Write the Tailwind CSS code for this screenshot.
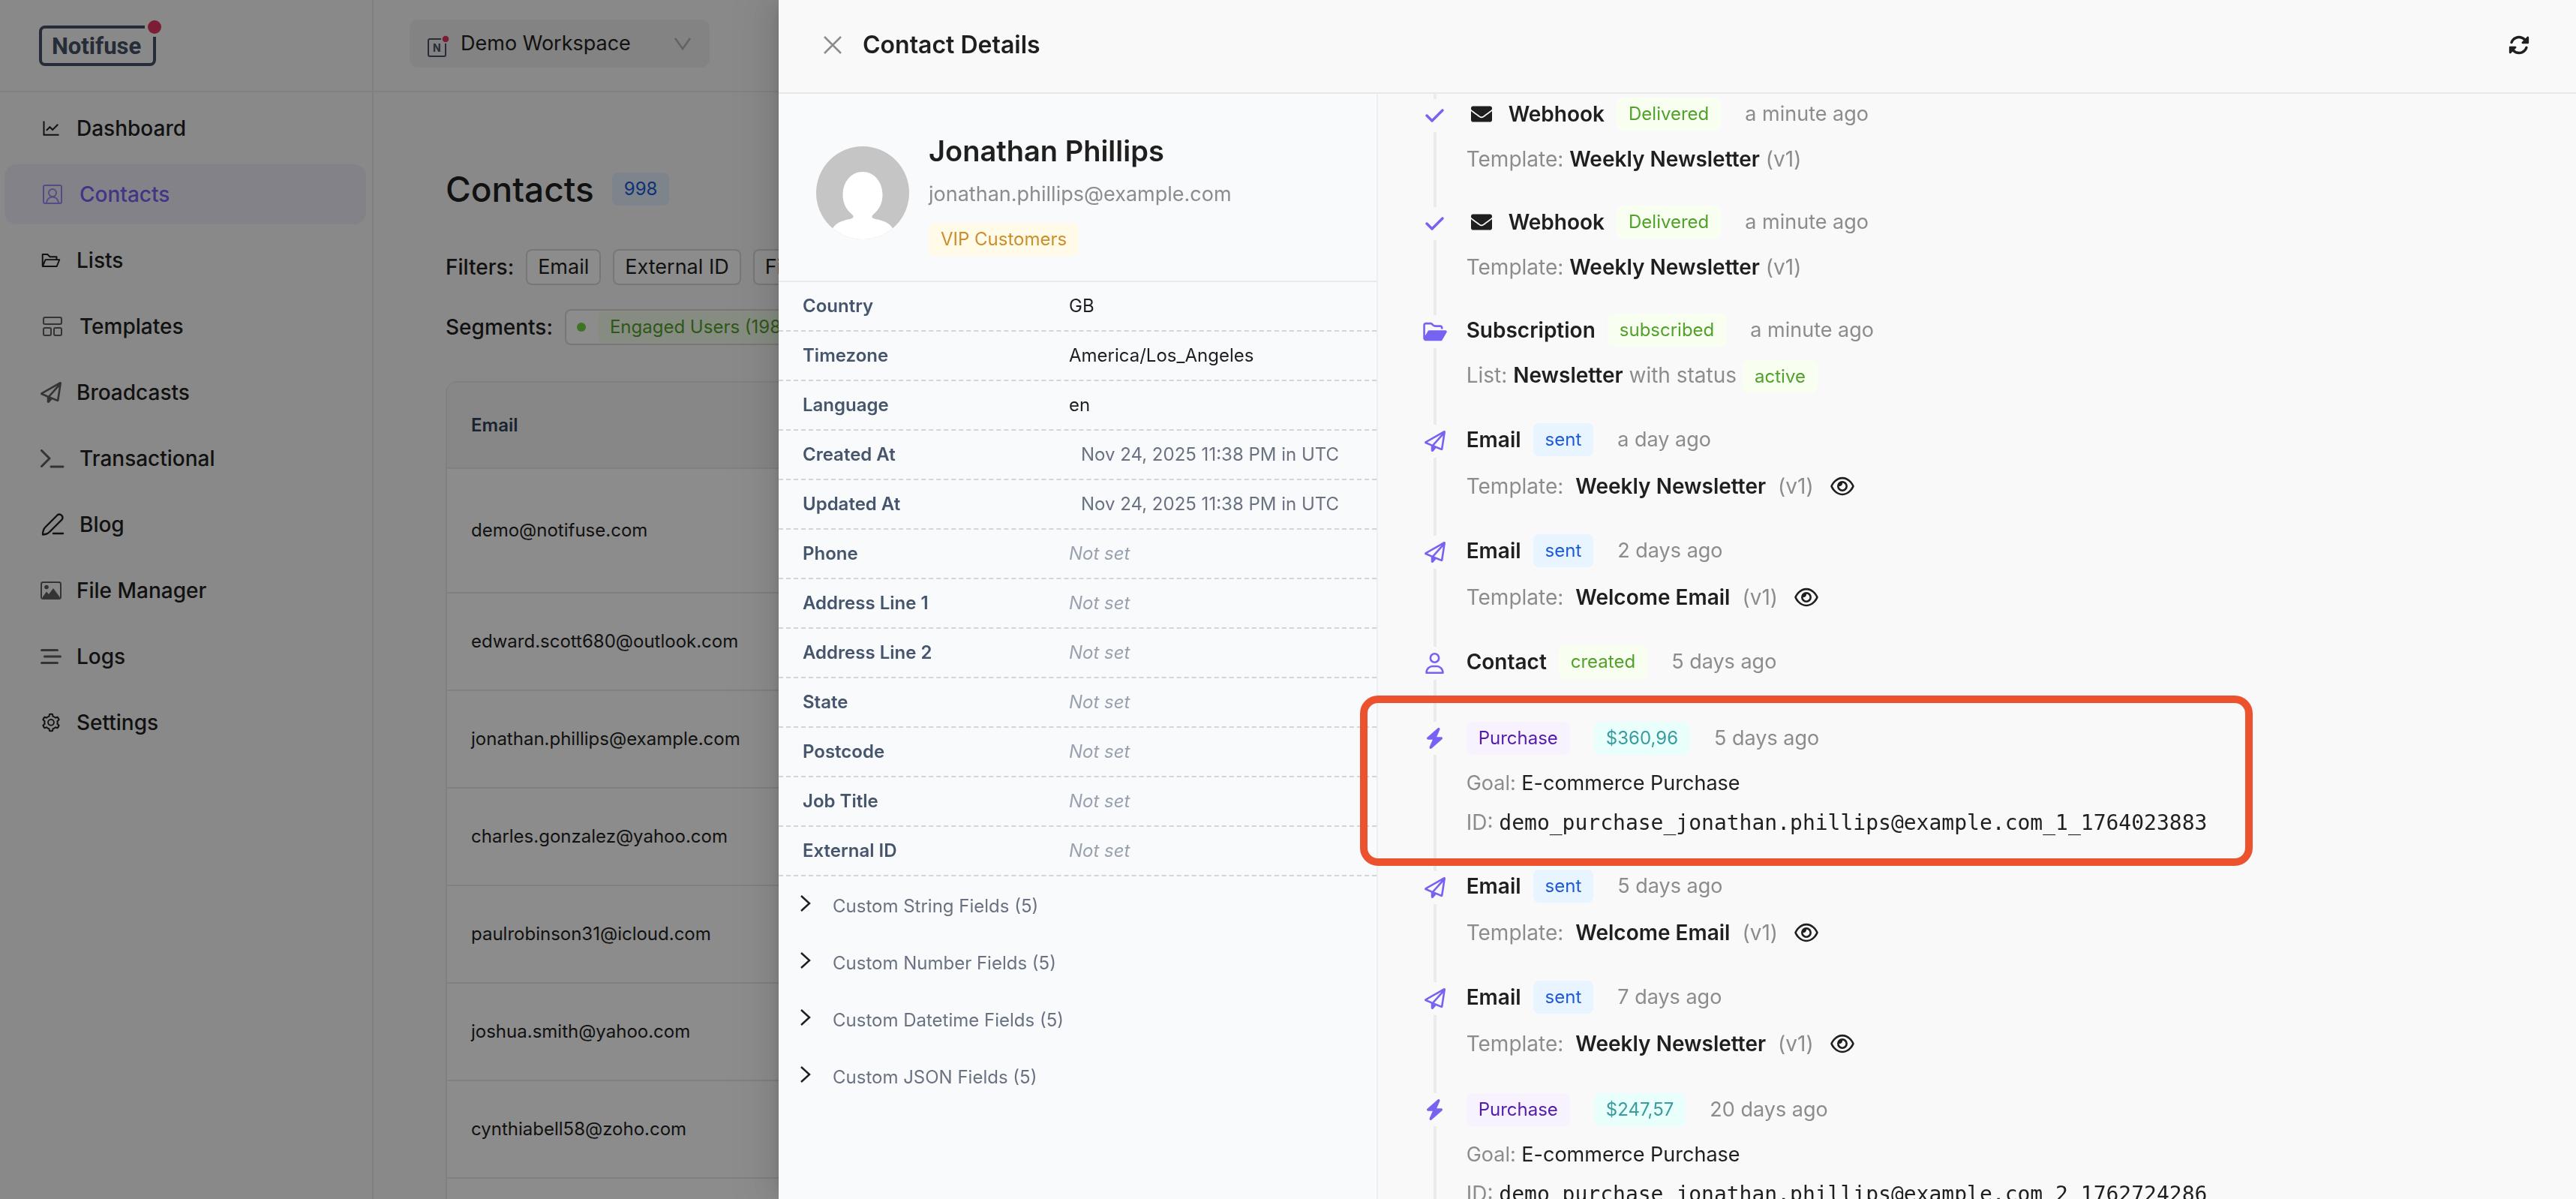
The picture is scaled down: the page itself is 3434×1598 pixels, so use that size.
<!DOCTYPE html>
<html lang="en">
<head>
    <meta charset="UTF-8">
    <meta name="viewport" content="width=device-width, initial-scale=1.0">
    <title>Contacts - Notifuse</title>
    <script src="https://cdn.jsdelivr.net/npm/@tailwindcss/browser@4"></script>
</head>
<body class="h-screen overflow-hidden bg-[#f9f9f9] font-['Inter',sans-serif] text-[28px] leading-[44px] text-[#1f1f1f]">
    <!-- Icon sprite -->
    <svg class="hidden">
        <symbol id="i-chart" viewBox="0 0 1024 1024"><path d="M888 792H200V168c0-4.4-3.6-8-8-8h-56c-4.4 0-8 3.6-8 8v688c0 4.4 3.6 8 8 8h752c4.4 0 8-3.6 8-8v-56c0-4.4-3.6-8-8-8zM305.8 637.7c3.1 3.1 8.1 3.1 11.3 0l138.3-137.6L583 628.5c3.1 3.1 8.2 3.1 11.3 0l275.4-275.3c3.1-3.1 3.1-8.2 0-11.3l-39.6-39.6c-3.1-3.1-8.2-3.1-11.3 0l-230 229.9L461.4 404c-3.1-3.1-8.2-3.1-11.3 0L266.3 586.7c-3.1 3.1-3.1 8.2 0 11.3l39.5 39.7z"/></symbol>
        <symbol id="i-folder" viewBox="0 0 1024 1024"><path d="M928 444H820V330.4c0-17.7-14.3-32-32-32H473L355.7 186.2a8.15 8.15 0 00-5.5-2.2H96c-17.7 0-32 14.3-32 32v592c0 17.7 14.3 32 32 32h698c13 0 24.8-7.9 29.7-20l134-332c1.5-3.8 2.3-7.9 2.3-12 0-17.7-14.3-32-32-32zM136 256h188.5l119.6 114.4H748V444H238c-13 0-24.8 7.9-29.7 20L136 643.2V256zm635.3 512H159l103.3-256h612.4L771.3 768z"/></symbol>
        <symbol id="i-gear" viewBox="0 0 1024 1024"><path d="M924.8 625.7l-65.5-56c3.1-19 4.7-38.4 4.7-57.8s-1.6-38.8-4.7-57.8l65.5-56a32.03 32.03 0 009.3-35.2l-.9-2.6a443.74 443.74 0 00-79.7-137.9l-1.8-2.1a32.12 32.12 0 00-35.1-9.5l-81.3 28.9c-30-24.6-63.5-44-99.7-57.6l-15.7-85a32.05 32.05 0 00-25.8-25.7l-2.7-.5c-52.1-9.4-106.9-9.4-159 0l-2.7.5a32.05 32.05 0 00-25.8 25.7l-15.8 85.4a351.86 351.86 0 00-99 57.4l-81.9-29.1a32 32 0 00-35.1 9.5l-1.8 2.1a446.02 446.02 0 00-79.7 137.9l-.9 2.6c-4.5 12.5-.8 26.5 9.3 35.2l66.3 56.6c-3.1 18.8-4.6 38-4.6 57.1 0 19.2 1.5 38.4 4.6 57.1L99 625.5a32.03 32.03 0 00-9.3 35.2l.9 2.6c18.1 50.4 44.9 96.9 79.7 137.9l1.8 2.1a32.12 32.12 0 0035.1 9.5l81.9-29.1c29.8 24.5 63.1 43.9 99 57.4l15.8 85.4a32.05 32.05 0 0025.8 25.7l2.7.5a449.4 449.4 0 00159 0l2.7-.5a32.05 32.05 0 0025.8-25.7l15.7-85a350 350 0 0099.7-57.6l81.3 28.9a32 32 0 0035.1-9.5l1.8-2.1c34.8-41.1 61.6-87.5 79.7-137.9l.9-2.6c4.5-12.3.8-26.3-9.3-35zM788.3 465.9c2.5 15.1 3.8 30.6 3.8 46.1s-1.3 31-3.8 46.1l-6.6 40.1 74.7 63.9a370.03 370.03 0 01-42.6 73.6L721 702.8l-31.4 25.8c-23.9 19.6-50.5 35-79.3 45.8l-38.1 14.3-17.9 97a377.5 377.5 0 01-85 0l-17.9-97.2-37.8-14.5c-28.5-10.8-55-26.2-78.7-45.7l-31.4-25.9-93.4 33.2c-17-22.9-31.2-47.6-42.6-73.6l75.5-64.5-6.5-40c-2.4-14.9-3.7-30.3-3.7-45.5 0-15.3 1.2-30.6 3.7-45.5l6.5-40-75.5-64.5c11.3-26.1 25.6-50.7 42.6-73.6l93.4 33.2 31.4-25.9c23.7-19.5 50.2-34.9 78.7-45.7l37.9-14.3 17.9-97.2c28.1-3.2 56.8-3.2 85 0l17.9 97 38.1 14.3c28.7 10.8 55.4 26.2 79.3 45.8l31.4 25.8 92.8-32.9c17 22.9 31.2 47.6 42.6 73.6L781.8 426l6.5 39.9zM512 326c-97.2 0-176 78.8-176 176s78.8 176 176 176 176-78.8 176-176-78.8-176-176-176zm79.2 255.2A111.6 111.6 0 01512 614c-29.9 0-58-11.7-79.2-32.8A111.6 111.6 0 01400 502c0-29.9 11.7-58 32.8-79.2C454 401.6 482.1 390 512 390c29.9 0 58 11.6 79.2 32.8A111.6 111.6 0 01624 502c0 29.9-11.7 58-32.8 79.2z"/></symbol>
        <symbol id="i-plane" viewBox="0 0 512 512"><path d="M16.1 260.2c-22.6 12.9-20.5 47.3 3.6 57.3L160 376V479.3c0 18.1 14.6 32.7 32.7 32.7c9.7 0 18.9-4.3 25.1-11.8l62-74.3 123.9 51.6c18.9 7.9 40.8-4.5 43.9-24.7l64-416c1.9-12.1-3.4-24.3-13.5-31.2s-23.3-7.5-34-1.4l-448 256zm52.1 25.5L409.7 90.6 190.1 336l1.2 1L68.2 285.7zM403.3 425.4L236.7 355.9 450.8 116.6 403.3 425.4z"/></symbol>
        <symbol id="i-contact" viewBox="0 0 32 32"><g fill="none" stroke="currentColor" stroke-width="2"><rect x="4" y="4" width="24" height="24" rx="2"/><circle cx="16" cy="14" r="5"/><path d="M8 28c0-5 3.500-8.500 8-8.500s8 3.500 8 8.500"/></g></symbol>
        <symbol id="i-layout" viewBox="0 0 32 32"><g fill="none" stroke="currentColor" stroke-width="2"><rect x="4" y="4" width="24" height="9" rx="2"/><rect x="4" y="18" width="10" height="10" rx="2"/><rect x="18" y="18" width="10" height="10" rx="2"/></g></symbol>
        <symbol id="i-terminal" viewBox="0 0 32 32"><path d="M1.500 5.500 12 16 1.500 26.500M14 27h16" fill="none" stroke="currentColor" stroke-width="3" stroke-linecap="round" stroke-linejoin="round"/></symbol>
        <symbol id="i-pen" viewBox="0 0 32 32"><path d="M3 29.500c0-5 .5-7 3.500-10L22.500 3.500a4.300 4.300 0 0 1 6 6L12.500 25.500c-3 3-4.500 3.500-9.500 4zM17 28h13" fill="none" stroke="currentColor" stroke-width="2.400" stroke-linecap="round" stroke-linejoin="round"/></symbol>
        <symbol id="i-image" viewBox="0 0 28 28"><rect x="1" y="3" width="26" height="22" rx="2.500" fill="none" stroke="currentColor" stroke-width="2"/><circle cx="8" cy="9.500" r="2.800"/><path d="M3 22.500 8 15.500l3 3.500 6-8 8.500 11.500v1.500H3z"/></symbol>
        <symbol id="i-lines" viewBox="0 0 28 28"><path d="M1.500 5.500h21M5.500 14h21M1.500 22.500h21" fill="none" stroke="currentColor" stroke-width="3" stroke-linecap="round"/></symbol>
        <symbol id="i-check" viewBox="0 0 448 512"><path d="M438.600 105.400c12.500 12.500 12.500 32.800 0 45.300l-256 256c-12.500 12.500-32.800 12.500-45.300 0l-128-128c-12.500-12.500-12.500-32.800 0-45.300s32.800-12.500 45.300 0L160 338.700 393.400 105.400c12.500-12.500 32.800-12.500 45.300 0z"/></symbol>
        <symbol id="i-mail" viewBox="0 0 512 512"><path d="M502.300 190.800c3.900-3.100 9.700-.2 9.700 4.700V400c0 26.500-21.500 48-48 48H48c-26.500 0-48-21.500-48-48V195.600c0-5 5.700-7.800 9.700-4.700 22.400 17.400 52.100 39.500 154.100 113.600 21.100 15.400 56.700 47.800 92.200 47.600 35.700.3 72-32.800 92.300-47.600 102-74.100 131.600-96.300 154-113.700zM256 320c23.200.4 56.600-29.200 73.400-41.400 132.700-96.300 142.800-104.700 173.400-128.700 5.800-4.500 9.200-11.500 9.200-18.900v-19c0-26.500-21.500-48-48-48H48c-26.500 0-48 21.500-48 48v19c0 7.400 3.400 14.300 9.200 18.900 30.600 23.900 40.700 32.400 173.400 128.700 16.800 12.200 50.200 41.800 73.400 41.400z"/></symbol>
        <symbol id="i-folder-solid" viewBox="0 0 576 512"><path d="M384 480h48c11.400 0 21.900-6 27.600-15.900l112-192c5.800-9.900 5.800-22.100 .1-32.100S555.500 224 544 224H144c-11.400 0-21.900 6-27.600 15.900L48 357.100V96c0-8.800 7.200-16 16-16H181.500c4.200 0 8.300 1.700 11.300 4.700l26.500 26.500c21 21 49.500 32.800 79.200 32.800H416c8.800 0 16 7.200 16 16v32h48V160c0-35.300-28.700-64-64-64H298.500c-17 0-33.300-6.700-45.300-18.700L226.700 50.700c-12-12-28.300-18.700-45.300-18.700H64C28.700 32 0 60.700 0 96V416c0 35.300 28.700 64 64 64H87.700 384z"/></symbol>
        <symbol id="i-user" viewBox="0 0 448 512"><path d="M304 128a80 80 0 1 0 -160 0 80 80 0 1 0 160 0zM96 128a128 128 0 1 1 256 0A128 128 0 1 1 96 128zM49.300 464H398.700c-8.900-63.300-63.300-112-129-112H178.300c-65.700 0-120.100 48.700-129 112zM0 482.300C0 383.800 79.800 304 178.300 304h91.400C368.200 304 448 383.800 448 482.300c0 16.400-13.300 29.700-29.700 29.700H29.700C13.300 512 0 498.700 0 482.300z"/></symbol>
        <symbol id="i-bolt" viewBox="0 0 448 512"><path d="M349.400 44.600c5.900-13.700 1.500-29.700-10.600-38.500s-28.600-8-39.900 1.800l-256 224c-10 8.800-13.600 22.900-8.900 35.300S50.700 288 64 288H175.500L98.600 467.400c-5.900 13.700-1.500 29.700 10.600 38.500s28.600 8 39.900-1.800l256-224c10-8.800 13.600-22.900 8.900-35.300s-16.600-20.700-30-20.700H272.500L349.400 44.600z"/></symbol>
        <symbol id="i-eye" viewBox="0 0 576 512"><path d="M288 80c-65.200 0-118.800 29.600-159.900 67.700C89.600 183.500 63 226 49.400 256c13.600 30 40.200 72.500 78.600 108.300C169.200 402.400 222.800 432 288 432s118.800-29.600 159.900-67.700C486.400 328.500 513 286 526.600 256c-13.600-30-40.200-72.500-78.600-108.300C406.800 109.600 353.200 80 288 80zM95.400 112.600C142.500 68.800 207.200 32 288 32s145.500 36.800 192.600 80.600c46.800 43.500 78.100 95.400 93 131.100c3.300 7.900 3.300 16.700 0 24.600c-14.900 35.700-46.200 87.700-93 131.100C433.500 443.200 368.800 480 288 480s-145.500-36.800-192.600-80.600C48.600 356 17.300 304 2.500 268.300c-3.300-7.900-3.300-16.700 0-24.600C17.300 208 48.600 156 95.400 112.600zM288 336c44.200 0 80-35.800 80-80s-35.800-80-80-80c-.7 0-1.300 0-2 0c1.300 5.100 2 10.500 2 16c0 35.300-28.700 64-64 64c-5.500 0-10.900-.7-16-2c0 .7 0 1.300 0 2c0 44.200 35.800 80 80 80zm0-208a128 128 0 1 1 0 256 128 128 0 1 1 0-256z"/></symbol>
        <symbol id="i-refresh" viewBox="0 0 512 512"><path d="M142.900 142.900c62.200-62.200 162.700-62.500 225.300-1L327 183c-6.900 6.900-8.900 17.200-5.200 26.200s12.500 14.800 22.200 14.800H463.500c0 0 0 0 0 0H472c13.300 0 24-10.700 24-24V72c0-9.700-5.800-18.500-14.800-22.200s-19.300-1.700-26.200 5.200L413.400 96.600c-87.600-86.500-228.700-86.200-315.800 1C73.200 122 55.600 150.700 44.800 181.400c-5.900 16.700 2.900 34.900 19.500 40.800s34.900-2.900 40.800-19.500c7.700-21.800 20.200-42.300 37.800-59.800zM16 312v7.600 .7V440c0 9.700 5.800 18.500 14.800 22.200s19.300 1.700 26.200-5.200l41.600-41.600c87.600 86.500 228.700 86.200 315.800-1c24.400-24.400 42.100-53.100 52.900-83.700c5.900-16.700-2.900-34.900-19.500-40.800s-34.900 2.900-40.800 19.500c-7.700 21.800-20.200 42.300-37.800 59.800c-62.200 62.200-162.700 62.500-225.300 1L185 329c6.900-6.900 8.900-17.200 5.200-26.200s-12.500-14.800-22.200-14.800H48.400h-.7H40c-13.300 0-24 10.700-24 24z"/></symbol>
        <symbol id="i-right" viewBox="0 0 24 24"><path d="M6 2 17 12 6 22" fill="none" stroke="currentColor" stroke-width="2.500"/></symbol>
    </svg>

    <div class="flex h-full">
        <!-- Sidebar -->
        <aside class="w-[498px] shrink-0 border-r-2 border-[#e7e7e7]">
            <div class="h-[123px] border-b-2 border-[#ececec] pt-6 pl-[50px]">
                <svg class="h-[68px] w-[168px]" viewBox="0 0 168 68" role="img" aria-label="Notifuse">
                    <path d="M143 12H10a6 6 0 0 0-6 6v38a6 6 0 0 0 6 6h140a6 6 0 0 0 6-6V25" fill="none" stroke="#465066" stroke-width="4"/>
                    <circle cx="156" cy="12" r="9" fill="#e0365f"/>
                    <text x="19" y="48" class="font-['Roboto',sans-serif] text-[31px] font-bold" fill="#465066">Notifuse</text>
                </svg>
            </div>
            <nav class="flex flex-col gap-2 py-2 pr-2 pl-1.5 font-medium">
                <a href="#" class="flex h-20 items-center gap-5 rounded-2xl px-12"><svg class="h-7 w-7" fill="currentColor"><use href="#i-chart"/></svg>Dashboard</a>
                <a href="#" class="flex h-20 items-center gap-5 rounded-2xl bg-[#f0edfa] px-12 text-[#7763f1]"><svg class="h-8 w-8 opacity-70"><use href="#i-contact"/></svg>Contacts</a>
                <a href="#" class="flex h-20 items-center gap-5 rounded-2xl px-12"><svg class="h-7 w-7" fill="currentColor"><use href="#i-folder"/></svg>Lists</a>
                <a href="#" class="flex h-20 items-center gap-5 rounded-2xl px-12"><svg class="h-8 w-8 opacity-70"><use href="#i-layout"/></svg>Templates</a>
                <a href="#" class="flex h-20 items-center gap-5 rounded-2xl px-12"><svg class="h-7 w-7 opacity-70" fill="currentColor"><use href="#i-plane"/></svg>Broadcasts</a>
                <a href="#" class="flex h-20 items-center gap-5 rounded-2xl px-12"><svg class="h-8 w-8 opacity-70"><use href="#i-terminal"/></svg>Transactional</a>
                <a href="#" class="flex h-20 items-center gap-5 rounded-2xl px-12"><svg class="h-8 w-8"><use href="#i-pen"/></svg>Blog</a>
                <a href="#" class="flex h-20 items-center gap-5 rounded-2xl px-12"><svg class="h-7 w-7 opacity-70" fill="currentColor"><use href="#i-image"/></svg>File Manager</a>
                <a href="#" class="flex h-20 items-center gap-5 rounded-2xl px-12"><svg class="h-7 w-7 opacity-70"><use href="#i-lines"/></svg>Logs</a>
                <a href="#" class="flex h-20 items-center gap-5 rounded-2xl px-12"><svg class="h-7 w-7" fill="currentColor"><use href="#i-gear"/></svg>Settings</a>
            </nav>
        </aside>

        <!-- Page -->
        <main class="min-w-0 flex-1">
            <header class="flex h-[123px] items-start border-b-2 border-[#ececec] pt-[26px] pl-12">
                <button type="button" class="flex h-16 w-[400px] items-center rounded-xl bg-[#eeeeee] px-6">
                    <svg class="h-9 w-8" viewBox="0 0 32 36">
                        <path d="M18 12H3a2 2 0 0 0-2 2v19a2 2 0 0 0 2 2h19a2 2 0 0 0 2-2V18" fill="none" stroke="#465066" stroke-width="2"/>
                        <circle cx="24" cy="12" r="4.300" fill="#e0365f"/>
                        <text x="7" y="29" class="text-[14px] font-bold" fill="#465066">N</text>
                    </svg>
                    <span class="ml-3 text-[27px]">Demo Workspace</span>
                    <svg class="ml-auto h-6 w-6" viewBox="0 0 24 24"><path d="m2 5 10 14 10-14" fill="none" stroke="#b4b4b4" stroke-width="2.500"/></svg>
                </button>
            </header>

            <div class="pt-[101px] pl-24">
                <div class="flex items-center gap-6">
                    <h1 class="text-[46px] leading-[56px] font-medium">Contacts</h1>
                    <span class="rounded-lg bg-[#e6f0ff] px-4 text-[24px] text-[#1d5bd6]">998</span>
                </div>
                <div class="mt-[52px] flex items-center gap-4 whitespace-nowrap">
                    <span class="font-medium">Filters:</span>
                    <button type="button" class="h-12 rounded-lg border-2 border-[#d9d9d9] bg-white px-3.5 text-[27px]">Email</button>
                    <button type="button" class="h-12 rounded-lg border-2 border-[#d9d9d9] bg-white px-3.5 text-[27px]">External ID</button>
                    <button type="button" class="h-12 rounded-lg border-2 border-[#d9d9d9] bg-white px-3.5 text-[27px]">First Name</button>
                </div>
                <div class="mt-8 flex items-center gap-4 whitespace-nowrap">
                    <span class="font-medium">Segments:</span>
                    <button type="button" class="flex h-12 items-center gap-4 rounded-lg border-2 border-[#d9d9d9] bg-white pl-3.5">
                        <span class="h-3 w-3 rounded-full bg-[#73d13d]"></span>
                        <span class="rounded-lg bg-[#f6ffed] px-4 text-[24px] text-[#52a12c]">Engaged Users (198)</span>
                    </button>
                </div>

                <div class="mt-12 overflow-hidden rounded-tl-2xl border-t-2 border-l-2 border-[#e9e9e9] bg-white">
                    <table class="w-full text-left text-[24px]">
                        <thead class="bg-[#f6f6f6] text-slate-700">
                            <tr class="h-[114px] border-b-2 border-[#e9e9e9]"><th class="pl-8 font-semibold">Email</th></tr>
                        </thead>
                        <tbody>
                            <tr class="h-[166px] border-b-2 border-[#e9e9e9]"><td class="pl-8">demo@notifuse.com</td></tr>
                            <tr class="h-[130px] border-b-2 border-[#e9e9e9]"><td class="pl-8">edward.scott680@outlook.com</td></tr>
                            <tr class="h-[130px] border-b-2 border-[#e9e9e9]"><td class="pl-8">jonathan.phillips@example.com</td></tr>
                            <tr class="h-[130px] border-b-2 border-[#e9e9e9]"><td class="pl-8">charles.gonzalez@yahoo.com</td></tr>
                            <tr class="h-[130px] border-b-2 border-[#e9e9e9]"><td class="pl-8">paulrobinson31@icloud.com</td></tr>
                            <tr class="h-[130px] border-b-2 border-[#e9e9e9]"><td class="pl-8">joshua.smith@yahoo.com</td></tr>
                            <tr class="h-[130px] border-b-2 border-[#e9e9e9]"><td class="pl-8">cynthiabell58@zoho.com</td></tr>
                            <tr class="h-[130px]"><td></td></tr>
                        </tbody>
                    </table>
                </div>
            </div>
        </main>
    </div>

    <!-- Drawer -->
    <div class="fixed inset-0 flex bg-black/45 pl-[1038px]">
        <section class="flex min-w-0 flex-1 flex-col bg-[#f9f9f9] shadow-[-12px_0_32px_0_rgba(0,0,0,0.08),-6px_0_12px_-8px_rgba(0,0,0,0.12),-18px_0_56px_16px_rgba(0,0,0,0.05)]">
            <header class="flex h-[125px] shrink-0 items-center border-b-2 border-[#e8e8e8] pr-[62px] pb-1 pl-[58px]">
                <button type="button" aria-label="Close" class="text-[#8c8c8c]"><svg class="h-7 w-7" viewBox="0 0 28 28"><path d="M3 3 25 25M25 3 3 25" fill="none" stroke="currentColor" stroke-width="2.500"/></svg></button>
                <h2 class="ml-[26px] text-[32px] leading-[48px] font-semibold">Contact Details</h2>
                <button type="button" aria-label="Refresh" class="ml-auto"><svg class="h-7 w-7" fill="currentColor"><use href="#i-refresh"/></svg></button>
            </header>

            <div class="flex min-h-0 flex-1 overflow-hidden">
                <!-- Profile -->
                <div class="w-1/3 shrink-0 border-r-2 border-[#eeeff2] bg-[#f9fafc]">
                    <div class="flex items-center gap-[26px] border-b-2 border-[#e7e9ec] px-[50px] pt-12 pb-[33px]">
                        <svg class="h-[124px] w-[124px] rounded-full" viewBox="0 0 124 124">
                            <rect width="124" height="124" fill="#c5c5c5"/>
                            <path d="M62 34c15 0 26.500 13 26.500 31 0 11-5 20-12.500 26-3 3-1.500 5 3 6 12 2 20 6 24 14v13H21v-13c4-8 12-12 24-14 4.500-1 6-3 3-6-7.500-6-12.500-15-12.500-26C35.500 47 47 34 62 34z" fill="#fff"/>
                        </svg>
                        <div>
                            <h3 class="text-[38px] leading-[56px] font-semibold">Jonathan Phillips</h3>
                            <p class="mt-2 text-[27px] text-[#8c8c8c]">jonathan.phillips@example.com</p>
                            <span class="mt-4 inline-block rounded-lg bg-[#fffbe8] px-4 align-top text-[24px] text-[#cc8e2c]">VIP Customers</span>
                        </div>
                    </div>
                    <dl class="text-[24px]">
                        <div class="flex h-[66px] items-center border-b-2 border-dashed border-gray-300 pl-8"><dt class="w-[355px] font-semibold text-slate-600">Country</dt><dd>GB</dd></div>
                        <div class="flex h-[66px] items-center border-b-2 border-dashed border-gray-300 pl-8"><dt class="w-[355px] font-semibold text-slate-600">Timezone</dt><dd>America/Los_Angeles</dd></div>
                        <div class="flex h-[66px] items-center border-b-2 border-dashed border-gray-300 pl-8"><dt class="w-[355px] font-semibold text-slate-600">Language</dt><dd>en</dd></div>
                        <div class="flex h-[66px] items-center border-b-2 border-dashed border-gray-300 pl-8"><dt class="w-[355px] font-semibold text-slate-600">Created At</dt><dd class="pl-4 text-gray-500">Nov 24, 2025 11:38 PM in UTC</dd></div>
                        <div class="flex h-[66px] items-center border-b-2 border-dashed border-gray-300 pl-8"><dt class="w-[355px] font-semibold text-slate-600">Updated At</dt><dd class="pl-4 text-gray-500">Nov 24, 2025 11:38 PM in UTC</dd></div>
                        <div class="flex h-[66px] items-center border-b-2 border-dashed border-gray-300 pl-8"><dt class="w-[355px] font-semibold text-slate-600">Phone</dt><dd class="text-gray-400 italic">Not set</dd></div>
                        <div class="flex h-[66px] items-center border-b-2 border-dashed border-gray-300 pl-8"><dt class="w-[355px] font-semibold text-slate-600">Address Line 1</dt><dd class="text-gray-400 italic">Not set</dd></div>
                        <div class="flex h-[66px] items-center border-b-2 border-dashed border-gray-300 pl-8"><dt class="w-[355px] font-semibold text-slate-600">Address Line 2</dt><dd class="text-gray-400 italic">Not set</dd></div>
                        <div class="flex h-[66px] items-center border-b-2 border-dashed border-gray-300 pl-8"><dt class="w-[355px] font-semibold text-slate-600">State</dt><dd class="text-gray-400 italic">Not set</dd></div>
                        <div class="flex h-[66px] items-center border-b-2 border-dashed border-gray-300 pl-8"><dt class="w-[355px] font-semibold text-slate-600">Postcode</dt><dd class="text-gray-400 italic">Not set</dd></div>
                        <div class="flex h-[66px] items-center border-b-2 border-dashed border-gray-300 pl-8"><dt class="w-[355px] font-semibold text-slate-600">Job Title</dt><dd class="text-gray-400 italic">Not set</dd></div>
                        <div class="flex h-[66px] items-center border-b-2 border-dashed border-gray-300 pl-8"><dt class="w-[355px] font-semibold text-slate-600">External ID</dt><dd class="text-gray-400 italic">Not set</dd></div>
                    </dl>
                    <div class="flex flex-col gap-8 pt-[18px] pl-6 text-[24px] text-gray-500">
                        <button type="button" class="flex gap-6"><svg class="mt-1.5 h-6 w-6 text-[#1f1f1f]"><use href="#i-right"/></svg>Custom String Fields (5)</button>
                        <button type="button" class="flex gap-6"><svg class="mt-1.5 h-6 w-6 text-[#1f1f1f]"><use href="#i-right"/></svg>Custom Number Fields (5)</button>
                        <button type="button" class="flex gap-6"><svg class="mt-1.5 h-6 w-6 text-[#1f1f1f]"><use href="#i-right"/></svg>Custom Datetime Fields (5)</button>
                        <button type="button" class="flex gap-6"><svg class="mt-1.5 h-6 w-6 text-[#1f1f1f]"><use href="#i-right"/></svg>Custom JSON Fields (5)</button>
                    </div>
                </div>

                <!-- Timeline -->
                <ol class="min-w-0 flex-1 pl-14 whitespace-nowrap">
                    <li class="flex h-[5px] w-10 justify-center"><span class="-mb-0.5 w-1 bg-[#ebebeb]"></span></li>

                    <li class="flex gap-[22px]">
                        <div class="flex w-10 shrink-0 flex-col items-center">
                            <div class="flex h-[46px] items-center pt-0.5 text-[#7763f1]"><svg class="h-7 w-[25px]" fill="currentColor"><use href="#i-check"/></svg></div>
                            <span class="-mb-0.5 w-1 flex-1 bg-[#ebebeb]"></span>
                        </div>
                        <div class="pb-10">
                            <div class="flex items-center">
                                <svg class="mx-1.5 h-7 w-7" fill="currentColor"><use href="#i-mail"/></svg>
                                <strong class="ml-4 font-semibold">Webhook</strong>
                                <span class="ml-4 rounded-lg bg-[#f8fff0] px-4 text-[24px] text-[#52a12c]">Delivered</span>
                                <time class="ml-8 text-[27px] text-[#8c8c8c]">a minute ago</time>
                            </div>
                            <p class="mt-4 text-[#8c8c8c]">Template: <strong class="font-semibold text-[#1f1f1f]">Weekly Newsletter</strong> (v1)</p>
                        </div>
                    </li>

                    <li class="flex gap-[22px]">
                        <div class="flex w-10 shrink-0 flex-col items-center">
                            <div class="flex h-[46px] items-center pt-0.5 text-[#7763f1]"><svg class="h-7 w-[25px]" fill="currentColor"><use href="#i-check"/></svg></div>
                            <span class="-mb-0.5 w-1 flex-1 bg-[#ebebeb]"></span>
                        </div>
                        <div class="pb-10">
                            <div class="flex items-center">
                                <svg class="mx-1.5 h-7 w-7" fill="currentColor"><use href="#i-mail"/></svg>
                                <strong class="ml-4 font-semibold">Webhook</strong>
                                <span class="ml-4 rounded-lg bg-[#f8fff0] px-4 text-[24px] text-[#52a12c]">Delivered</span>
                                <time class="ml-8 text-[27px] text-[#8c8c8c]">a minute ago</time>
                            </div>
                            <p class="mt-4 text-[#8c8c8c]">Template: <strong class="font-semibold text-[#1f1f1f]">Weekly Newsletter</strong> (v1)</p>
                        </div>
                    </li>

                    <li class="flex gap-[22px]">
                        <div class="flex w-10 shrink-0 flex-col items-center">
                            <div class="flex h-[46px] items-center pt-0.5 text-[#7763f1]"><svg class="h-7 w-8" fill="currentColor"><use href="#i-folder-solid"/></svg></div>
                            <span class="-mb-0.5 w-1 flex-1 bg-[#ebebeb]"></span>
                        </div>
                        <div class="pb-10">
                            <div class="flex items-center">
                                <strong class="font-semibold">Subscription</strong>
                                <span class="ml-4 rounded-lg bg-[#f8fff0] px-4 text-[24px] text-[#52a12c]">subscribed</span>
                                <time class="ml-8 text-[27px] text-[#8c8c8c]">a minute ago</time>
                            </div>
                            <div class="mt-4 flex text-[#8c8c8c]">
                                <p>List: <strong class="font-semibold text-[#1f1f1f]">Newsletter</strong> with status</p>
                                <span class="mt-0.5 ml-2 rounded-lg bg-[#f8fff0] px-4 text-[24px] text-[#52a12c]">active</span>
                            </div>
                        </div>
                    </li>

                    <li class="flex gap-[22px]">
                        <div class="flex w-10 shrink-0 flex-col items-center">
                            <div class="flex h-[46px] items-center pt-0.5 text-[#7763f1]"><svg class="h-7 w-7" fill="currentColor"><use href="#i-plane"/></svg></div>
                            <span class="-mb-0.5 w-1 flex-1 bg-[#ebebeb]"></span>
                        </div>
                        <div class="pb-10">
                            <div class="flex items-center">
                                <strong class="font-semibold">Email</strong>
                                <span class="ml-4 rounded-lg bg-[#e8f4ff] px-4 text-[24px] text-[#1d5bd6]">sent</span>
                                <time class="ml-8 text-[27px] text-[#8c8c8c]">a day ago</time>
                            </div>
                            <div class="mt-4 flex h-12 items-center gap-4 text-[#8c8c8c]">
                                <span>Template:</span><strong class="font-semibold text-[#1f1f1f]">Weekly Newsletter</strong><span>(v1)</span>
                                <button type="button" aria-label="Preview" class="px-1.5 text-[#1f1f1f]"><svg class="h-7 w-8" fill="currentColor"><use href="#i-eye"/></svg></button>
                            </div>
                        </div>
                    </li>

                    <li class="flex gap-[22px]">
                        <div class="flex w-10 shrink-0 flex-col items-center">
                            <div class="flex h-[46px] items-center pt-0.5 text-[#7763f1]"><svg class="h-7 w-7" fill="currentColor"><use href="#i-plane"/></svg></div>
                            <span class="-mb-0.5 w-1 flex-1 bg-[#ebebeb]"></span>
                        </div>
                        <div class="pb-10">
                            <div class="flex items-center">
                                <strong class="font-semibold">Email</strong>
                                <span class="ml-4 rounded-lg bg-[#e8f4ff] px-4 text-[24px] text-[#1d5bd6]">sent</span>
                                <time class="ml-8 text-[27px] text-[#8c8c8c]">2 days ago</time>
                            </div>
                            <div class="mt-4 flex h-12 items-center gap-4 text-[#8c8c8c]">
                                <span>Template:</span><strong class="font-semibold text-[#1f1f1f]">Welcome Email</strong><span>(v1)</span>
                                <button type="button" aria-label="Preview" class="px-1.5 text-[#1f1f1f]"><svg class="h-7 w-8" fill="currentColor"><use href="#i-eye"/></svg></button>
                            </div>
                        </div>
                    </li>

                    <li class="flex gap-[22px]">
                        <div class="flex w-10 shrink-0 flex-col items-center">
                            <div class="flex h-[46px] items-center pt-0.5 text-[#7763f1]"><svg class="h-7 w-[25px]" fill="currentColor"><use href="#i-user"/></svg></div>
                            <span class="-mb-0.5 w-1 flex-1 bg-[#ebebeb]"></span>
                        </div>
                        <div class="pb-14">
                            <div class="flex items-center">
                                <strong class="font-semibold">Contact</strong>
                                <span class="ml-4 rounded-lg bg-[#f8fff0] px-4 text-[24px] text-[#52a12c]">created</span>
                                <time class="ml-8 text-[27px] text-[#8c8c8c]">5 days ago</time>
                            </div>
                        </div>
                    </li>

                    <li class="relative flex gap-[22px]">
                        <!-- Highlight frame -->
                        <div class="pointer-events-none absolute -top-[33px] bottom-[5px] -left-20 w-[1190px] rounded-3xl border-[10px] border-[#eb522d]"></div>
                        <div class="flex w-10 shrink-0 flex-col items-center">
                            <div class="flex h-[46px] items-center pt-0.5 text-[#7763f1]"><svg class="h-7 w-[25px]" fill="currentColor"><use href="#i-bolt"/></svg></div>
                            <span class="-mb-0.5 w-1 flex-1 bg-[#ebebeb]"></span>
                        </div>
                        <div class="pb-10">
                            <div class="flex items-center gap-8 pt-0.5">
                                <span class="rounded-lg bg-[#f8f2ff] px-4 text-[24px] text-[#531dab]">Purchase</span>
                                <span class="rounded-lg bg-[#e8fffc] px-4 text-[24px] text-[#3b9c9f]">$360,96</span>
                                <time class="text-[27px] text-[#8c8c8c]">5 days ago</time>
                            </div>
                            <p class="mt-4 text-[27px]"><span class="text-[#8c8c8c]">Goal:</span> E-commerce Purchase</p>
                            <p class="mt-2"><span class="text-[#8c8c8c]">ID:</span> <span class="font-['DejaVu_Sans_Mono',monospace]">demo_purchase_jonathan.phillips@example.com_1_1764023883</span></p>
                        </div>
                    </li>

                    <li class="flex gap-[22px]">
                        <div class="flex w-10 shrink-0 flex-col items-center">
                            <div class="flex h-[46px] items-center pt-0.5 text-[#7763f1]"><svg class="h-7 w-7" fill="currentColor"><use href="#i-plane"/></svg></div>
                            <span class="-mb-0.5 w-1 flex-1 bg-[#ebebeb]"></span>
                        </div>
                        <div class="pb-10">
                            <div class="flex items-center">
                                <strong class="font-semibold">Email</strong>
                                <span class="ml-4 rounded-lg bg-[#e8f4ff] px-4 text-[24px] text-[#1d5bd6]">sent</span>
                                <time class="ml-8 text-[27px] text-[#8c8c8c]">5 days ago</time>
                            </div>
                            <div class="mt-4 flex h-12 items-center gap-4 text-[#8c8c8c]">
                                <span>Template:</span><strong class="font-semibold text-[#1f1f1f]">Welcome Email</strong><span>(v1)</span>
                                <button type="button" aria-label="Preview" class="px-1.5 text-[#1f1f1f]"><svg class="h-7 w-8" fill="currentColor"><use href="#i-eye"/></svg></button>
                            </div>
                        </div>
                    </li>

                    <li class="flex gap-[22px]">
                        <div class="flex w-10 shrink-0 flex-col items-center">
                            <div class="flex h-[46px] items-center pt-0.5 text-[#7763f1]"><svg class="h-7 w-7" fill="currentColor"><use href="#i-plane"/></svg></div>
                            <span class="-mb-0.5 w-1 flex-1 bg-[#ebebeb]"></span>
                        </div>
                        <div class="pb-10">
                            <div class="flex items-center">
                                <strong class="font-semibold">Email</strong>
                                <span class="ml-4 rounded-lg bg-[#e8f4ff] px-4 text-[24px] text-[#1d5bd6]">sent</span>
                                <time class="ml-8 text-[27px] text-[#8c8c8c]">7 days ago</time>
                            </div>
                            <div class="mt-4 flex h-12 items-center gap-4 text-[#8c8c8c]">
                                <span>Template:</span><strong class="font-semibold text-[#1f1f1f]">Weekly Newsletter</strong><span>(v1)</span>
                                <button type="button" aria-label="Preview" class="px-1.5 text-[#1f1f1f]"><svg class="h-7 w-8" fill="currentColor"><use href="#i-eye"/></svg></button>
                            </div>
                        </div>
                    </li>

                    <li class="flex gap-[22px]">
                        <div class="flex w-10 shrink-0 flex-col items-center">
                            <div class="flex h-[46px] items-center pt-0.5 text-[#7763f1]"><svg class="h-7 w-[25px]" fill="currentColor"><use href="#i-bolt"/></svg></div>
                            <span class="-mb-0.5 w-1 flex-1 bg-[#ebebeb]"></span>
                        </div>
                        <div class="pb-10">
                            <div class="flex items-center gap-8 pt-0.5">
                                <span class="rounded-lg bg-[#f8f2ff] px-4 text-[24px] text-[#531dab]">Purchase</span>
                                <span class="rounded-lg bg-[#e8fffc] px-4 text-[24px] text-[#3b9c9f]">$247,57</span>
                                <time class="text-[27px] text-[#8c8c8c]">20 days ago</time>
                            </div>
                            <p class="mt-4 text-[27px]"><span class="text-[#8c8c8c]">Goal:</span> E-commerce Purchase</p>
                            <p class="mt-2"><span class="text-[#8c8c8c]">ID:</span> <span class="font-['DejaVu_Sans_Mono',monospace]">demo_purchase_jonathan.phillips@example.com_2_1762724286</span></p>
                        </div>
                    </li>
                </ol>
            </div>
        </section>
    </div>
</body>
</html>
